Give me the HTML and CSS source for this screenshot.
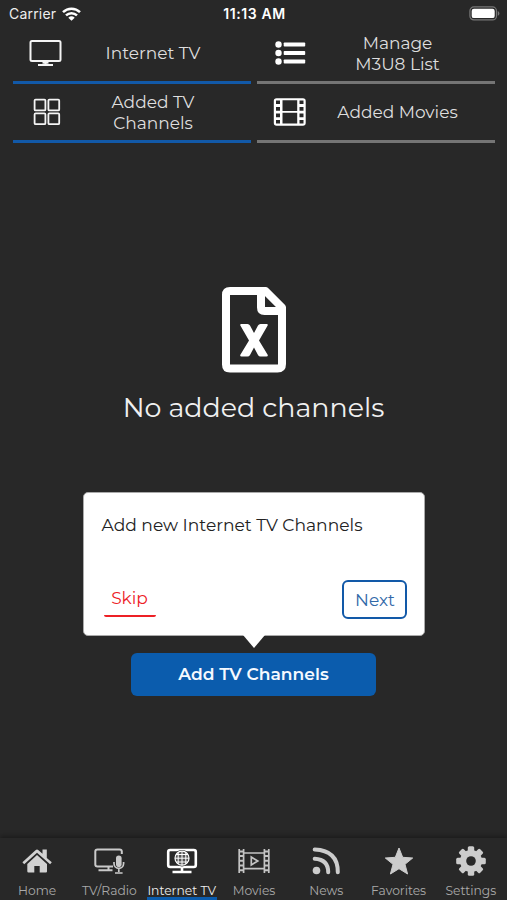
FILE: index.html
```html
<!DOCTYPE html>
<html lang="en">
<head>
<meta charset="utf-8">
<meta name="viewport" content="width=device-width, initial-scale=1">
<title>Internet TV</title>
<link rel="stylesheet" href="styles.css">
</head>
<body>
<div class="app">
  <header class="status">
    <div class="carrier"><span>Carrier</span>
      <svg width="19" height="14" viewBox="0 0 19 14" fill="none" stroke="#fff" stroke-width="2.5"><path d="M1 5.2a12.2 12.2 0 0 1 17 0M4 8.4a8 8 0 0 1 11 0"/><path d="M6.3 10.7a4.7 4.7 0 0 1 6.4 0L9.5 13.8z" fill="#fff" stroke="none"/></svg>
    </div>
    <div class="time">11:13 AM</div>
    <svg class="battery" width="31" height="15" viewBox="0 0 31 15"><rect x=".9" y=".9" width="26.6" height="13" rx="4" fill="none" stroke="#777" stroke-width="1.2"/><rect x="2.7" y="2.7" width="23" height="9.4" rx="2.2" fill="#fff"/><path d="M28.8 5v4.8q1.6-.8 1.6-2.4T28.8 5z" fill="#777"/></svg>
  </header>

  <nav class="menu">
    <a class="item on">
      <svg width="34" height="28" viewBox="0 0 34 28" fill="none" stroke="#f4f4f4" stroke-width="2"><rect x="1.500" y="2" width="30" height="20" rx="1.5"/><path d="M16.500 22v3.600M9 26h15" stroke-width="2.200"/><path d="M13.500 23.700h6" stroke-width="2"/></svg>
      <span>Internet TV</span>
    </a>
    <a class="item">
      <svg width="34" height="28" viewBox="0 0 34 28" fill="#fff"><circle cx="5.5" cy="5.5" r="3.2"/><circle cx="5.5" cy="14" r="3.2"/><circle cx="5.5" cy="22.5" r="3.2"/><rect x="10.7" y="3.4" width="21.5" height="4.2" rx=".8"/><rect x="10.7" y="11.9" width="21.5" height="4.2" rx=".8"/><rect x="10.7" y="20.4" width="21.5" height="4.2" rx=".8"/></svg>
      <span>Manage<br>M3U8 List</span>
    </a>
    <a class="item on">
      <svg width="34" height="28" viewBox="0 0 34 28" fill="none" stroke="#f4f4f4" stroke-width="1.8"><rect x="5.6" y="1.6" width="10.8" height="10.8" rx="1"/><rect x="19.4" y="1.6" width="10.8" height="10.8" rx="1"/><rect x="5.6" y="15.4" width="10.8" height="10.8" rx="1"/><rect x="19.4" y="15.4" width="10.8" height="10.8" rx="1"/></svg>
      <span>Added TV<br>Channels</span>
    </a>
    <a class="item">
      <svg width="34" height="28" viewBox="0 0 34 28"><path fill="#fff" fill-rule="evenodd" d="M3.6.2h26.3q2.8 0 2.8 2.8v22q0 2.8-2.8 2.8H3.6Q.8 27.800.8 25V3Q.8.2 3.6.2zM9.500 2.200V13h14.700V2.200zM9.500 14.800v10.700h14.700V14.800zM3 2.600v3.400h4V2.600zM3 9v3.800h4V9zM3 15.500v3.800h4v-3.800zM3 22v3.400h4V22zM26.500 2.600v3.400h4V2.600zM26.500 9v3.800h4V9zM26.500 15.500v3.800h4v-3.800zM26.500 22v3.400h4V22z"/></svg>
      <span>Added Movies</span>
    </a>
  </nav>

  <main class="content">
    <svg class="file" width="66" height="88" viewBox="0 0 66 88" fill="none" stroke="#fff" stroke-width="8"><path d="M9 5h35.500L61 21.500V78q0 4.500-4.500 4.500H9Q5 82.500 5 78.500V9q0-4 4-4z" stroke-linejoin="round"/><path d="M40 6v15.500q0 3.500 3.500 3.500H61"/><path fill="#fff" stroke="none" d="M20.500 38h6q1.700 0 2.500 1.500l4 7.500 4-7.500q.8-1.500 2.500-1.500h6q2 0 1 1.800L38 54.500l8.500 14q1 2-1 2h-6q-1.700 0-2.500-1.500L33 61.500 29 69q-.8 1.500-2.500 1.500h-6q-2 0-1-2L28 54.500l-8.500-14.700q-1-1.800 1-1.800z"/></svg>
    <h1>No added channels</h1>
    <section class="tip">
      <p>Add new Internet TV Channels</p>
      <div class="actions"><a class="skip">Skip</a><button class="next">Next</button></div>
    </section>
    <button class="add">Add TV Channels</button>
  </main>

  <nav class="tabs">
    <a class="tab"><svg width="32" height="32" viewBox="0 0 32 32" fill="#d2d2d2"><path d="M16 10 26 19v7.500q0 1-1 1h-6.300V21h-5.400v6.500H7.500q-1.200 0-1.200-1.200V19z"/><path d="M21.500 4.500h4.300v8.400l5 4.400-1.700 2L16 7.800 3.200 19.300l-1.800-2L14.500 5.200q1.500-1.200 3 0l4 3.500z"/></svg><span>Home</span></a>
    <a class="tab"><svg width="32" height="32" viewBox="0 0 32 32" fill="none" stroke="#cacaca" stroke-width="2.200"><path d="M20 21.500H4.500Q2.300 21.500 2.300 19.500V6.500Q2.300 4.500 4.500 4.500h22Q28.800 4.500 28.800 6.500V9M15.500 22v3.200M5.500 25.300h14" stroke-width="2"/><rect x="23" y="10.500" width="5.600" height="11.500" rx="2.800" fill="#cacaca" stroke="none"/><path d="M21 17v1.500a4.800 4.800 0 0 0 9.600 0V17M25.800 23.300V27M22 28h7.600" stroke-width="1.700"/></svg><span>TV/Radio</span></a>
    <a class="tab active"><svg width="32" height="32" viewBox="0 0 32 32" fill="none" stroke="#fff"><rect x="2.200" y="5" width="27.600" height="17" rx="2" stroke-width="2.600"/><circle cx="16" cy="13.200" r="8.200" fill="#282828" stroke="none"/><circle cx="16" cy="13.200" r="7" fill="#555" stroke-width="1.200"/><path d="M16 6.200v14M9 13.200h14M10 9.500h12M10 17h12M12.200 7.500v11.400M19.800 7.500v11.400"/><path d="M16 22v5M6.500 27h19" stroke-width="2.600"/></svg><span>Internet TV</span></a>
    <a class="tab"><svg width="32" height="32" viewBox="0 0 32 32" fill="none" stroke="#c4c4c4" stroke-width="1.700"><path d="M1.200 4v24M5.600 4v24M26.400 4v24M30.800 4v24M5.500 8h21M5.500 23.700h21"/><path d="M1 6.500h4.500M1 11h4.500M1 15.800h4.500M1 20.500h4.500M1 25.300h4.500M26.500 6.500H31M26.500 11H31M26.500 15.800H31M26.500 20.500H31M26.500 25.300H31" stroke-width="2"/><path d="M13.300 12v8l6.500-4z"/></svg><span>Movies</span></a>
    <a class="tab"><svg width="32" height="32" viewBox="0 0 32 32" fill="none" stroke="#ccc" stroke-width="4" stroke-linecap="round"><circle cx="6.500" cy="25.500" r="3.800" fill="#ccc" stroke="none"/><path d="M4.700 13.800Q18.200 14.500 18.200 27.300M4.700 4.500Q28 5.500 27.800 27.300"/></svg><span>News</span></a>
    <a class="tab"><svg width="32" height="32" viewBox="0 0 32 32" fill="#ccc" stroke="#ccc" stroke-linejoin="round"><path d="m16 3 3.700 9.300 10 .7-7.700 6.300 2.600 9.700-8.600-5.300L7.400 29 10 19.300 2.300 13l10-.7z"/></svg><span>Favorites</span></a>
    <a class="tab"><svg width="32" height="32" viewBox="-16 -16 32 32"><g fill="#ccc"><g id="teeth"><rect x="-3.200" y="-14.800" width="6.400" height="29.600" rx="1.500"/><rect x="-14.800" y="-3.200" width="29.600" height="6.400" rx="1.500"/></g><use href="#teeth" transform="rotate(45)"/><circle r="11"/></g><circle r="4.800" fill="#282828"/></svg><span>Settings</span></a>
  </nav>
</div>
</body>
</html>
```
FILE: styles.css
```css
* { box-sizing: border-box; }
body { margin: 0; background: #282828; color: #dedede; font-family: Montserrat, Inter, "Open Sans", sans-serif; }
button { font: inherit; }
svg { display: block; flex: none; }
.app { width: 507px; height: 900px; display: flex; flex-direction: column; overflow: hidden; }

.status { height: 25px; padding: 2px 7px 0 9px; display: grid; grid-template-columns: 1fr auto 1fr; align-items: center; font: 14px/20px Inter, sans-serif; color: #eee; }
.carrier { display: flex; align-items: center; gap: 6px; letter-spacing: .2px; }
.time { font-weight: 600; font-size: 14px; letter-spacing: .6px; color: #fff; }
.battery { justify-self: end; }

.menu { display: grid; grid-template-columns: 238px 238px; grid-auto-rows: 59px; column-gap: 6px; padding: 0 13px; }
.item { display: flex; align-items: center; padding: 1px 21px 0 16px; border-bottom: 3px solid #757575; }
.item.on { border-color: #1259a8; }
.item:not(.on) { padding-right: 20px; }
.item svg { margin-bottom: 2px; }
.item span { flex: 1; margin-left: 13px; text-align: center; font-size: 17px; line-height: 21px; white-space: nowrap; }

.content { flex: 1; display: flex; flex-direction: column; align-items: center; padding-top: 143px; }
h1 { margin: 16px 0 0; font-size: 26.9px; line-height: 36px; font-weight: 400; color: #f0f0f0; }
.tip { position: relative; width: 342px; height: 144px; margin-top: 66px; padding: 20px 18px 16px; display: flex; flex-direction: column; justify-content: space-between; background: #fff; border: 1px solid #aaa; border-radius: 5px; color: #222; }
.tip::after { content: ""; position: absolute; left: 159px; top: 142px; border: solid transparent; border-width: 13px 11px 0; border-top-color: #fff; }
.tip p { margin: 0; font-size: 17.1px; line-height: 24px; }
.actions { display: flex; justify-content: space-between; align-items: center; }
.skip { width: 52px; height: 34px; margin-left: 2px; color: #ed2025; border-bottom: 2px solid #ed2025; border-radius: 2px; text-align: center; font-size: 17px; line-height: 30px; }
.next { width: 65px; height: 39px; padding: 0 0 0 2px; margin-right: -1px; border: 2px solid #1259a8; border-radius: 6px; background: #fff; color: #3269a8; font-size: 17px; }
.add { width: 245px; height: 43px; margin-top: 17px; padding: 0 0 2px; border: 0; border-radius: 6px; background: #0b5cad; color: #f5f9ff; font-size: 17.1px; font-weight: 600; }

.tabs { height: 62px; padding-left: 1px; display: grid; grid-template-columns: repeat(7, 1fr); box-shadow: 0 -2px 5px rgba(0, 0, 0, .35); background: #282828; }
.tab { display: flex; flex-direction: column; align-items: center; padding-top: 7px; color: #aaa; }
.tab span { margin-top: 5px; height: 18px; font-size: 12.3px; line-height: 17px; white-space: nowrap; }
.tab.active span { width: 70px; text-align: center; color: #eee; border-bottom: 3px solid #0b5cad; }
```
